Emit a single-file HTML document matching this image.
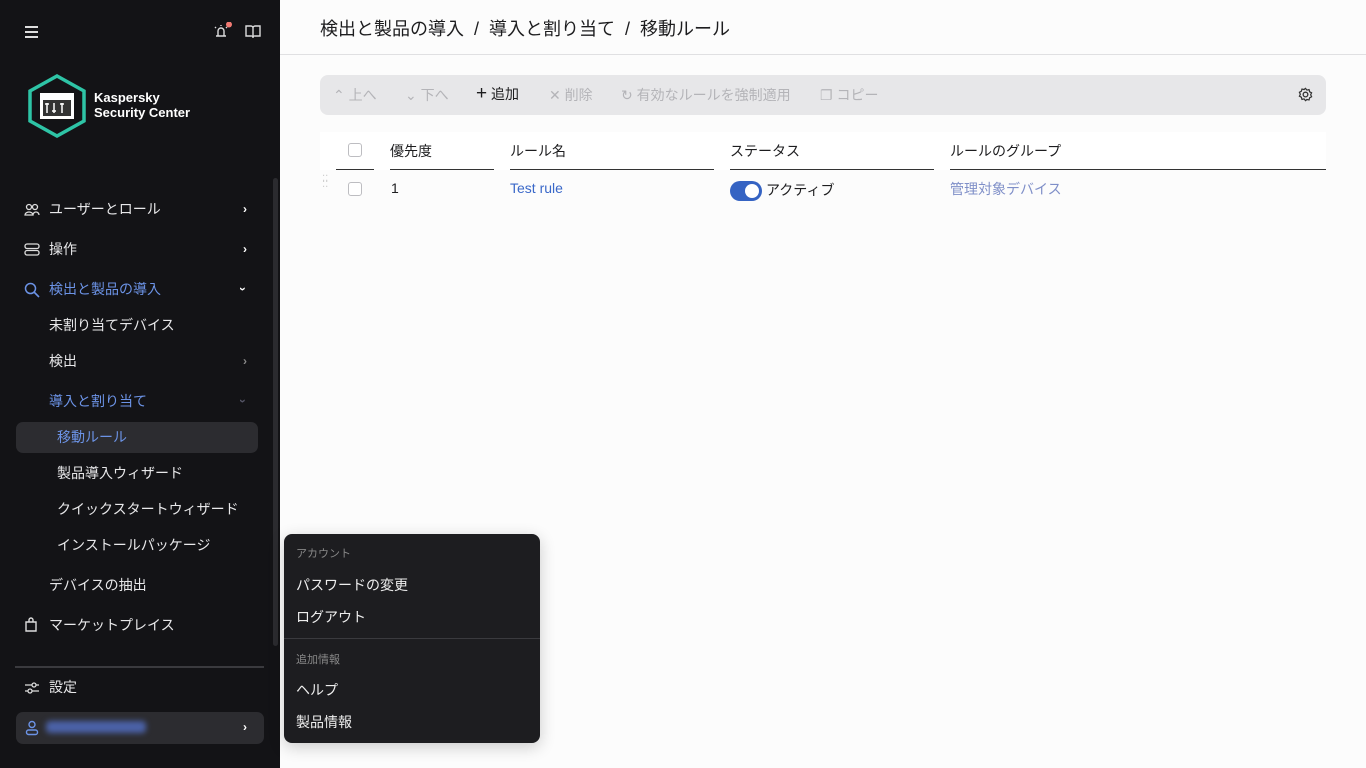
<!DOCTYPE html>
<html><head><meta charset="utf-8"><style>
*{box-sizing:border-box;margin:0;padding:0}
body{width:1366px;height:768px;overflow:hidden;background:#fcfcfc;font-family:"Liberation Sans","Noto Sans CJK JP",sans-serif;position:relative}
.sb{position:absolute;left:0;top:0;width:280px;height:768px;background:#131316;color:#e8e8ea}
.t{position:absolute;font-size:14px;white-space:nowrap;margin-top:-1px}
.blue{color:#6c93e6}
.chev{position:absolute;left:243px;font-size:12px;color:#fff;font-weight:bold}
.main .t{color:#1d1d1f}
.hdr{position:absolute;left:280px;top:0;right:0;height:55px;border-bottom:1px solid #e0e0e2;background:#fcfcfc}
.tb{position:absolute;left:320px;top:75px;width:1006px;height:40px;background:#e7e7e9;border-radius:8px}
.dis{color:#b4b4b8!important}
.cb{position:absolute;width:14px;height:14px;border:1px solid #bdbdc1;border-radius:3px;background:#fff}
.line{position:absolute;top:169px;height:1px;background:#333}
.menu{position:absolute;left:284px;top:534px;width:256px;height:209px;background:#1d1d20;border-radius:8px;box-shadow:0 4px 16px rgba(0,0,0,.2)}
</style></head><body>
<div class="sb">
 <div style="position:absolute;left:25px;top:26px;width:13px;height:2px;background:#ddd;box-shadow:0 5px 0 #ddd,0 10px 0 #ddd"></div>
 <svg style="position:absolute;left:212px;top:22px" width="20" height="18" viewBox="0 0 20 18"><path d="M4 14h10M6 14V9a3 3 0 0 1 6 0v5M9 3v1M3 5l1 1M15 5l-1 1" stroke="#ddd" stroke-width="1.4" fill="none"/><circle cx="17" cy="2.5" r="3" fill="#f07a73"/></svg>
 <svg style="position:absolute;left:245px;top:25px" width="16" height="13" viewBox="0 0 16 13"><path d="M1 1h5a2 2 0 0 1 2 2v9a2 2 0 0 0-2-1H1zM15 1h-5a2 2 0 0 0-2 2v9a2 2 0 0 1 2-1h5z" stroke="#ddd" stroke-width="1.4" fill="none"/></svg>
 <svg style="position:absolute;left:26px;top:73px" width="62" height="66" viewBox="0 0 62 66"><polygon points="31,3 58,18 58,48 31,63 4,48 4,18" fill="none" stroke="#2ec4a6" stroke-width="3.5"/><rect x="14" y="20" width="34" height="26" fill="#fff"/><rect x="17" y="27" width="28" height="16" fill="#333"/><path d="M21 30v10M28 30v10M36 30v10M19 31h4M26 38h4M34 31h4" stroke="#fff" stroke-width="1.5"/></svg>
 <div class="t" style="left:94px;top:91px;font-weight:bold;font-size:13px;line-height:15px;color:#fff">Kaspersky<br>Security Center</div>
 <div style="position:absolute;left:273px;top:178px;width:5px;height:468px;background:#2b2b2f;border-radius:3px"></div>
 <svg style="position:absolute;left:24px;top:203px" width="16" height="14"><circle cx="5" cy="4" r="2.5" stroke="#ddd" fill="none" stroke-width="1.3"/><circle cx="11" cy="4" r="2.5" stroke="#ddd" fill="none" stroke-width="1.3"/><path d="M1 12a4 3 0 0 1 8 0zM9 12a3 3 0 0 1 6 0" stroke="#ddd" fill="none" stroke-width="1.3"/></svg>
 <div class="t" style="left:49px;top:200px">ユーザーとロール</div><div class="chev" style="top:202px">›</div>
 <svg style="position:absolute;left:24px;top:243px" width="16" height="13"><rect x="1" y="1" width="14" height="4.5" rx="2" stroke="#ddd" fill="none" stroke-width="1.3"/><rect x="1" y="7.5" width="14" height="4.5" rx="2" stroke="#ddd" fill="none" stroke-width="1.3"/></svg>
 <div class="t" style="left:49px;top:240px">操作</div><div class="chev" style="top:242px">›</div>
 <svg style="position:absolute;left:24px;top:282px" width="16" height="16"><circle cx="6.5" cy="6.5" r="5" stroke="#6c93e6" fill="none" stroke-width="1.5"/><path d="M10 10l5 5" stroke="#6c93e6" stroke-width="1.6"/></svg>
 <div class="t blue" style="left:49px;top:280px">検出と製品の導入</div><div class="chev blue" style="top:282px;left:241px;transform:rotate(90deg)">›</div>
 <div class="t" style="left:49px;top:316px">未割り当てデバイス</div>
 <div class="t" style="left:49px;top:352px">検出</div><div class="chev" style="top:354px;color:#888">›</div>
 <div class="t blue" style="left:49px;top:392px">導入と割り当て</div><div class="chev" style="top:394px;left:241px;color:#556;transform:rotate(90deg)">›</div>
 <div style="position:absolute;left:16px;top:422px;width:242px;height:31px;background:#2c2c30;border-radius:7px"></div>
 <div class="t blue" style="left:57px;top:428px">移動ルール</div>
 <div class="t" style="left:57px;top:464px">製品導入ウィザード</div>
 <div class="t" style="left:57px;top:500px">クイックスタートウィザード</div>
 <div class="t" style="left:57px;top:536px">インストールパッケージ</div>
 <div class="t" style="left:49px;top:576px">デバイスの抽出</div>
 <svg style="position:absolute;left:24px;top:617px" width="14" height="16"><path d="M2 5h10v9H2zM5 5V3a2 2 0 0 1 4 0v2" stroke="#ddd" fill="none" stroke-width="1.4"/></svg>
 <div class="t" style="left:49px;top:616px">マーケットプレイス</div>
 <div style="position:absolute;left:15px;top:666px;width:249px;height:2px;background:#3a3a3e"></div>
 <svg style="position:absolute;left:24px;top:680px" width="16" height="16"><path d="M1 5h14M1 11h14" stroke="#ddd" stroke-width="1.3"/><circle cx="10" cy="5" r="2" fill="#131316" stroke="#ddd" stroke-width="1.3"/><circle cx="6" cy="11" r="2" fill="#131316" stroke="#ddd" stroke-width="1.3"/></svg>
 <div class="t" style="left:49px;top:678px">設定</div>
 <div style="position:absolute;left:16px;top:712px;width:248px;height:32px;background:#2c2c30;border-radius:7px"></div>
 <svg style="position:absolute;left:25px;top:720px" width="14" height="16"><circle cx="7" cy="4.5" r="3" stroke="#6c93e6" fill="none" stroke-width="1.4"/><rect x="1.5" y="10" width="11" height="4.5" rx="2" stroke="#6c93e6" fill="none" stroke-width="1.4"/></svg>
 <div style="position:absolute;left:46px;top:721px;width:100px;height:12px;background:#4b62a8;filter:blur(3px);border-radius:4px"></div>
 <div class="chev blue" style="top:720px">›</div>
</div>
<div class="main">
 <div class="hdr"></div>
 <div class="t" style="left:320px;top:16px;font-size:18px">検出と製品の導入 &nbsp;/ &nbsp;導入と割り当て &nbsp;/ &nbsp;移動ルール</div>
 <div class="tb"></div>
 <div class="t dis" style="left:333px;top:86px">⌃ 上へ</div>
 <div class="t dis" style="left:405px;top:86px">⌄ 下へ</div>
 <div class="t" style="left:476px;top:85px"><span style="font-size:19px;line-height:14px">+</span> 追加</div>
 <div class="t dis" style="left:549px;top:86px">✕ 削除</div>
 <div class="t dis" style="left:621px;top:86px">↻ 有効なルールを強制適用</div>
 <div class="t dis" style="left:820px;top:86px">❐ コピー</div>
 <svg style="position:absolute;left:1298px;top:87px" width="15" height="15" viewBox="0 0 16 16"><circle cx="8" cy="8" r="2.5" stroke="#333" fill="none" stroke-width="1.4"/><path d="M8 1.5l1.5 1.8 2.3-.5.6 2.3 2.1 1.1-1 2.1 1 2.1-2.1 1.1-.6 2.3-2.3-.5L8 14.5 6.5 12.7l-2.3.5-.6-2.3-2.1-1.1 1-2.1-1-2.1 2.1-1.1.6-2.3 2.3.5z" stroke="#333" fill="none" stroke-width="1.3"/></svg>
 <div style="position:absolute;left:320px;top:132px;width:1006px;height:38px;background:#fff"></div>
 <div class="cb" style="left:348px;top:143px"></div>
 <div class="t" style="left:390px;top:142px">優先度</div>
 <div class="t" style="left:510px;top:142px">ルール名</div>
 <div class="t" style="left:730px;top:142px">ステータス</div>
 <div class="t" style="left:950px;top:142px">ルールのグループ</div>
 <div class="line" style="left:336px;width:38px"></div>
 <div class="line" style="left:390px;width:104px"></div>
 <div class="line" style="left:510px;width:204px"></div>
 <div class="line" style="left:730px;width:204px"></div>
 <div class="line" style="left:950px;width:376px"></div>
 <div class="t" style="left:322px;top:178px;color:#ccc!important;font-size:10px;line-height:5px">⁚⁚<br>⁚⁚</div>
 <div class="cb" style="left:348px;top:182px"></div>
 <div class="t" style="left:391px;top:181px">1</div>
 <div class="t" style="left:510px;top:181px;color:#3a68c9!important">Test rule</div>
 <div style="position:absolute;left:730px;top:181px;width:32px;height:20px;background:#3563c3;border-radius:10px"><div style="position:absolute;right:3px;top:3px;width:14px;height:14px;border-radius:7px;background:#fff"></div></div>
 <div class="t" style="left:766px;top:181px">アクティブ</div>
 <div class="t" style="left:950px;top:180px;color:#7f8fc8!important">管理対象デバイス</div>
</div>
<div class="menu">
 <div class="t" style="left:12px;top:12px;font-size:11px;color:#888">アカウント</div>
 <div class="t" style="left:12px;top:42px;color:#eee">パスワードの変更</div>
 <div class="t" style="left:12px;top:74px;color:#eee">ログアウト</div>
 <div style="position:absolute;left:0;top:104px;width:256px;height:1px;background:#3a3a3e"></div>
 <div class="t" style="left:12px;top:118px;font-size:11px;color:#888">追加情報</div>
 <div class="t" style="left:12px;top:147px;color:#eee">ヘルプ</div>
 <div class="t" style="left:12px;top:179px;color:#eee">製品情報</div>
</div>
</body></html>
